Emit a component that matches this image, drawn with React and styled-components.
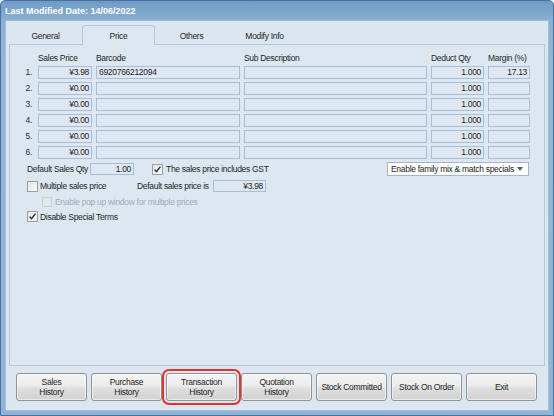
import React from "react"
import styled, { createGlobalStyle } from "styled-components"

const GlobalStyle = createGlobalStyle`
  html, body {
    margin: 0;
    padding: 0;
    background: #ffffff;
  }
  body {
    font-family: "Liberation Sans", Arial, sans-serif;
    font-size: 8.5px;
    letter-spacing: -0.3px;
    color: #1e1e1e;
  }
`

const priceRows = [
  { price: "¥3.98", barcode: "6920766212094", qty: "1.000", margin: "17.13" },
  { price: "¥0.00", barcode: "", qty: "1.000", margin: "" },
  { price: "¥0.00", barcode: "", qty: "1.000", margin: "" },
  { price: "¥0.00", barcode: "", qty: "1.000", margin: "" },
  { price: "¥0.00", barcode: "", qty: "1.000", margin: "" },
  { price: "¥0.00", barcode: "", qty: "1.000", margin: "" },
]

const tabs = ["General", "Price", "Others", "Modify Info"]

const buttons = [
  ["Sales", "History"],
  ["Purchase", "History"],
  ["Transaction", "History"],
  ["Quotation", "History"],
  ["Stock Committed"],
  ["Stock On Order"],
  ["Exit"],
]

function CheckBox({ checked, disabled }) {
  return (
    <Box $disabled={disabled}>
      {checked && (
        <svg width="9" height="9" viewBox="0 0 9 9">
          <path d="M1.6 4.6 L3.5 6.7 L7.4 1.6" fill="none" stroke="#2a2a2a" strokeWidth="1.4" />
        </svg>
      )}
    </Box>
  )
}

function App() {
  return (
    <>
      <GlobalStyle />
      <Window>
        <TitleBar>Last Modified Date: 14/06/2022</TitleBar>
        <Client>
          <TabStrip>
            {tabs.map((t) => (
              <Tab key={t} $active={t === "Price"}>
                {t}
              </Tab>
            ))}
          </TabStrip>
          <Pane>
            <PriceGrid>
              <span />
              <Header>Sales Price</Header>
              <Header>Barcode</Header>
              <Header>Sub Description</Header>
              <Header>Deduct Qty</Header>
              <Header>Margin (%)</Header>
              {priceRows.map((r, i) => (
                <React.Fragment key={i}>
                  <RowNum>{i + 1}.</RowNum>
                  <Field $align="right">{r.price}</Field>
                  <Field>{r.barcode}</Field>
                  <Field />
                  <Field $align="right">{r.qty}</Field>
                  <Field $align="right">{r.margin}</Field>
                </React.Fragment>
              ))}
            </PriceGrid>
            <Options>
              <OptionRow $h={14}>
                <Label $w={63}>Default Sales Qty</Label>
                <Field $w={44} $h={12} $align="right">1.00</Field>
                <CheckItem $ml={18}>
                  <CheckBox checked />
                  <span>The sales price includes GST</span>
                </CheckItem>
                <Select>
                  <span>Enable family mix &amp; match specials</span>
                  <Arrow />
                </Select>
              </OptionRow>
              <OptionRow $h={12}>
                <CheckItem $w={110} $gap={2}>
                  <CheckBox />
                  <span>Multiple sales price</span>
                </CheckItem>
                <Label $w={76}>Default sales price is</Label>
                <Field $w={53} $h={12} $align="right">¥3.98</Field>
              </OptionRow>
              <OptionRow $h={11} $indent={15}>
                <CheckItem $disabled>
                  <CheckBox disabled />
                  <span>Enable pop up window for multiple prices</span>
                </CheckItem>
              </OptionRow>
              <OptionRow $h={11}>
                <CheckItem $gap={2}>
                  <CheckBox checked />
                  <span>Disable Special Terms</span>
                </CheckItem>
              </OptionRow>
            </Options>
          </Pane>
          <ButtonBar>
            {buttons.map((lines) => (
              <Button key={lines.join(" ")} $highlight={lines[0] === "Transaction"}>
                {lines.map((l) => (
                  <span key={l}>{l}</span>
                ))}
              </Button>
            ))}
          </ButtonBar>
        </Client>
      </Window>
    </>
  )
}

export default App

const Window = styled.div`
  width: 554px;
  height: 416px;
  box-sizing: border-box;
  display: flex;
  flex-direction: column;
  padding: 0 4px 4px 4px;
  border: 1px solid #44719f;
  border-radius: 5px 5px 0 0;
  background: linear-gradient(to bottom, #6e9ac5 0px, #8ab0d3 19px, #93b7d8 60px, #8fb4d6 100%);
`

const TitleBar = styled.div`
  height: 19px;
  display: flex;
  align-items: center;
  font-size: 9px;
  font-weight: 700;
  letter-spacing: 0;
  color: #ffffff;
  white-space: nowrap;
`

const Client = styled.div`
  flex: 1;
  display: flex;
  flex-direction: column;
  background: #dce6f0;
  border: 1px solid #a3bcd6;
  min-height: 0;
`

const TabStrip = styled.div`
  height: 19px;
  margin-top: 4px;
  padding-left: 3px;
  display: flex;
  align-items: flex-end;
`

const Tab = styled.div`
  width: 73px;
  height: ${(p) => (p.$active ? "20px" : "17px")};
  box-sizing: border-box;
  display: flex;
  align-items: center;
  justify-content: center;
  color: #1e1e1e;
  ${(p) =>
    p.$active &&
    `
    position: relative;
    z-index: 1;
    margin-bottom: -1px;
    background: #dde7f1;
    border: 1px solid #b3c8dd;
    border-bottom: none;
    border-radius: 3px 3px 0 0;
  `}
`

const Pane = styled.div`
  flex: 1;
  margin: 0 3px;
  padding-top: 8px;
  border: 1px solid #b3c8dd;
  background: #dde7f1;
`

const PriceGrid = styled.div`
  display: grid;
  grid-template-columns: 24px 54px 144px 183px 53px 42px;
  grid-template-rows: 10px repeat(6, 13px);
  column-gap: 4px;
  row-gap: 3px;
`

const Header = styled.div`
  line-height: 10px;
  white-space: nowrap;
  color: #1e1e1e;
`

const RowNum = styled.div`
  text-align: right;
  padding-right: 2px;
  line-height: 13px;
  color: #2a2a2a;
`

const Field = styled.div`
  box-sizing: border-box;
  width: ${(p) => (p.$w ? `${p.$w}px` : "auto")};
  height: ${(p) => (p.$h ? `${p.$h}px` : "13px")};
  line-height: ${(p) => (p.$h ? `${p.$h - 2}px` : "11px")};
  padding: 0 2px;
  border: 1px solid #a6bed6;
  background: #dfe8f2;
  text-align: ${(p) => p.$align || "left"};
  white-space: nowrap;
  overflow: hidden;
  flex-shrink: 0;
`

const Options = styled.div`
  margin-top: 3px;
  padding: 0 15px 0 17px;
  display: flex;
  flex-direction: column;
  gap: 4px;
`

const OptionRow = styled.div`
  height: ${(p) => p.$h}px;
  padding-left: ${(p) => p.$indent || 0}px;
  display: flex;
  align-items: center;
`

const Label = styled.span`
  width: ${(p) => p.$w}px;
  flex-shrink: 0;
  white-space: nowrap;
`

const CheckItem = styled.div`
  display: flex;
  align-items: center;
  gap: ${(p) => (p.$gap !== undefined ? p.$gap : 3)}px;
  width: ${(p) => (p.$w ? `${p.$w}px` : "auto")};
  margin-left: ${(p) => p.$ml || 0}px;
  flex-shrink: 0;
  white-space: nowrap;
  color: ${(p) => (p.$disabled ? "#a3abb4" : "#1e1e1e")};
`

const Box = styled.span`
  width: ${(p) => (p.$disabled ? "10px" : "11px")};
  height: ${(p) => (p.$disabled ? "10px" : "11px")};
  box-sizing: border-box;
  display: flex;
  align-items: center;
  justify-content: center;
  border: 1px solid ${(p) => (p.$disabled ? "#c9d0d7" : "#9a9fa5")};
  background: ${(p) =>
    p.$disabled ? "#e3e6ea" : "linear-gradient(to bottom right, #e4e4e4, #fbfbfb)"};
  flex-shrink: 0;
`

const Select = styled.div`
  margin-left: auto;
  width: 142px;
  height: 14px;
  box-sizing: border-box;
  display: flex;
  align-items: center;
  justify-content: space-between;
  padding: 0 5px 0 3px;
  border: 1px solid #a7b6c6;
  background: #ffffff;
  white-space: nowrap;
`

const Arrow = styled.span`
  width: 0;
  height: 0;
  border-left: 3.5px solid transparent;
  border-right: 3.5px solid transparent;
  border-top: 4px solid #5a5f66;
`

const ButtonBar = styled.div`
  height: 44px;
  box-sizing: border-box;
  padding: 7px 0 9px 10px;
  display: flex;
  gap: 4px;
`

const Button = styled.div`
  width: 71px;
  height: 28px;
  box-sizing: border-box;
  display: flex;
  flex-direction: column;
  align-items: center;
  justify-content: center;
  line-height: 10px;
  color: #1e1e1e;
  border: 1px solid #8f9296;
  border-radius: 3px;
  background: linear-gradient(to bottom, #f4f4f4 0%, #ececec 45%, #dedede 55%, #d2d2d2 100%);
  box-shadow: inset 0 0 0 1px rgba(255, 255, 255, 0.55);
  white-space: nowrap;
  ${(p) =>
    p.$highlight &&
    `
    outline: 2px solid #e4332d;
    outline-offset: 2px;
  `}
`
